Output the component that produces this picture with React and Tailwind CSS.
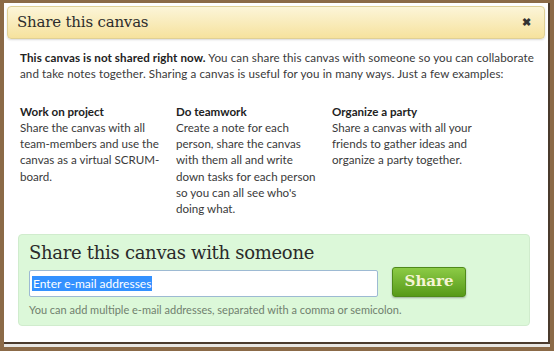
export default function App() {
  const slab = { fontFamily: '"DejaVu Serif", "Liberation Serif", serif' };
  return (
    <div className="w-[554px] h-[351px] bg-[#8b6a47] overflow-hidden font-['Lato',sans-serif]">
      <div className="ml-[4px] mt-[3px] w-[546px] h-[341px] bg-white border-r-[2px] border-b-[2px] border-[#4a3a2c] px-[3px] pt-[3px] shadow-[0_3px_0_#e8e6e2]">
        {/* header */}
        <div className="h-[33px] rounded-[4px] border border-[#e0d095] bg-gradient-to-b from-[#fcf5d8] to-[#f6e29d] flex items-center justify-between pl-[9px] pr-[13px] shadow-[0_1px_2px_rgba(0,0,0,0.15)]">
          <span className="text-[15px] text-[#2c2c2c] tracking-[-0.2px]" style={slab}>Share this canvas</span>
          <span className="text-[11px] font-bold text-[#333]">✖</span>
        </div>

        <div className="px-[13px] pt-[11px] text-[11.6px] leading-[16.3px] text-[#3a3a3a]">
          <p className="whitespace-nowrap tracking-[0.1px]">
            <b className="font-bold text-[#222]">This canvas is not shared right now.</b> You can share this canvas with someone so you can collaborate<br />
            and take notes together. Sharing a canvas is useful for you in many ways. Just a few examples:
          </p>

          <div className="grid grid-cols-[156px_156px_156px] mt-[21px] h-[130px]">
            <div>
              <div className="font-bold text-[#222]">Work on project</div>
              <div>Share the canvas with all<br />team-members and use the<br />canvas as a virtual SCRUM-<br />board.</div>
            </div>
            <div>
              <div className="font-bold text-[#222]">Do teamwork</div>
              <div>Create a note for each<br />person, share the canvas<br />with them all and write<br />down tasks for each person<br />so you can all see who's<br />doing what.</div>
            </div>
            <div>
              <div className="font-bold text-[#222]">Organize a party</div>
              <div>Share a canvas with all your<br />friends to gather ideas and<br />organize a party together.</div>
            </div>
          </div>
        </div>

        <div className="ml-[11px] w-[512px] h-[92px] rounded-[4px] bg-[#dcf8d9] border border-[#d0eccd] px-[10px] pt-[6px]">
          <div className="text-[18px] leading-[24px] text-[#2a2a2a] tracking-[-0.3px]" style={slab}>Share this canvas with someone</div>
          <div className="flex items-center mt-[5px]">
            <div className="w-[349px] h-[27px] bg-white border border-[#9dbad3] rounded-[2px] flex items-center pl-[2px]">
              <span className="bg-[#3391ff] text-white text-[12px] leading-[15px] px-[1px]">Enter e-mail addresses</span>
            </div>
            <button className="ml-[14px] -mt-[3px] w-[74px] h-[30px] rounded-[3px] bg-gradient-to-b from-[#8ccb45] to-[#579a17] border border-[#4f8a1a] text-[#f6f4d4] text-[15px] font-bold shadow-[0_1px_2px_rgba(0,0,0,0.3)]" style={slab}>Share</button>
          </div>
          <div className="text-[11px] text-[#70806e] mt-[5px]">You can add multiple e-mail addresses, separated with a comma or semicolon.</div>
        </div>
      </div>
    </div>
  );
}
